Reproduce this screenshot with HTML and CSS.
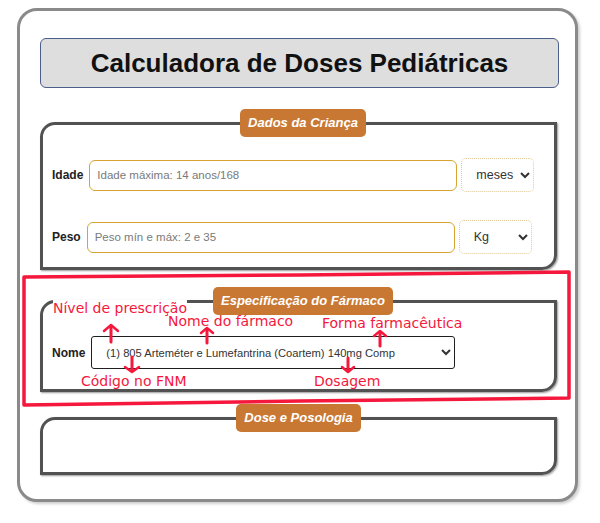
FILE: index.html
```html
<!DOCTYPE html>
<html lang="pt">
<head>
<meta charset="utf-8">
<title>Calculadora de Doses Pediátricas</title>
<link rel="stylesheet" href="styles.css">
</head>
<body>
<main class="card">
  <h1 class="title">Calculadora de Doses Pediátricas</h1>

  <fieldset class="group group-child">
    <legend>Dados da Criança</legend>
    <div class="rows">
      <div class="row">
        <label class="lbl" for="idade">Idade</label>
        <input id="idade" class="field" type="text" placeholder="Idade máxima: 14 anos/168">
        <select class="unit"><option>meses</option><option>anos</option></select>
      </div>
      <div class="row">
        <label class="lbl" for="peso">Peso</label>
        <input id="peso" class="field" type="text" placeholder="Peso mín e máx: 2 e 35">
        <select class="unit"><option>Kg</option></select>
      </div>
    </div>
  </fieldset>

  <fieldset class="group group-drug">
    <legend>Especificação do Fármaco</legend>
    <div class="row">
      <label class="lbl" for="nome">Nome</label>
      <select id="nome" class="drug"><option>(1) 805 Arteméter e Lumefantrina (Coartem) 140mg Comp</option></select>
    </div>
  </fieldset>

  <fieldset class="group group-dose">
    <legend>Dose e Posologia</legend>
  </fieldset>
</main>

<div class="annotations" aria-hidden="true">
  <svg class="marks" width="600" height="523" viewBox="0 0 600 523">
    <path class="box" d="M24 277 L300 275 L569 272 L569 398 L300 401 L24 405 Z"/>
    <g class="arrow">
      <path d="M111 342 L111 327"/><path class="head" d="M104 331 L111 325 L118 331"/>
      <path d="M207 343 L207 330"/><path class="head" d="M201 333 L207 328 L213 333"/>
      <path d="M380 346 L380 333"/><path class="head" d="M374 336 L380 331 L386 336"/>
      <path d="M132 357 L132 370"/><path class="head" d="M125 367 L132 372 L139 367"/>
      <path d="M348 358 L348 370"/><path class="head" d="M342 367 L348 372 L354 367"/>
    </g>
  </svg>
  <span class="note note-nivel">Nível de prescrição</span>
  <span class="note note-nome">Nome do fármaco</span>
  <span class="note note-forma">Forma farmacêutica</span>
  <span class="note note-codigo">Código no FNM</span>
  <span class="note note-dosagem">Dosagem</span>
</div>
</body>
</html>
```

FILE: styles.css
```css
html, body {
  margin: 0;
  padding: 0;
  background: #ffffff;
}

body {
  font-family: "Liberation Sans", Arial, sans-serif;
  color: #222;
  position: relative;
  width: 600px;
  height: 523px;
  overflow: hidden;
}

.card {
  box-sizing: border-box;
  width: 561px;
  height: 494px;
  margin: 8px 0 0 17px;
  padding: 27px 16px 0 20px;
  border: 3px solid #8a8a8a;
  border-radius: 20px;
  box-shadow: 2px 2px 3px #cfcfcf;
  display: flex;
  flex-direction: column;
  background: #fff;
}

.title {
  box-sizing: border-box;
  margin: 0;
  height: 50px;
  border: 1px solid #4b5e8c;
  border-radius: 6px;
  background: #dedede;
  color: #111;
  font-size: 26px;
  font-weight: bold;
  line-height: 48px;
  text-align: center;
}

.group {
  margin: 0 2px 0 0;
  min-width: 0;
  border: 3px solid #525252;
  border-radius: 15px 0 15px 0;
  box-shadow: 1px 1px 2px #9a9a9a;
}

.group legend {
  margin: 0 auto;
  padding: 6px 8px;
  background: #c97833;
  color: #fff;
  font-size: 13px;
  font-weight: bold;
  font-style: italic;
  line-height: 16px;
  border-radius: 5px;
}

.group-child {
  margin-top: 21px;
  padding: 21px 0 13px 9px;
}

.group-drug {
  margin-top: 17px;
  padding: 21px 0 20px 9px;
}

.group-dose {
  margin-top: 12px;
  padding: 0 0 40px 0;
}

.rows {
  display: flex;
  flex-direction: column;
  gap: 28px;
}

.row {
  display: flex;
  align-items: center;
}

.lbl {
  font-size: 12px;
  font-weight: bold;
  color: #222;
  margin-right: 6px;
}

.field {
  box-sizing: border-box;
  width: 368px;
  height: 31px;
  margin: 0;
  padding: 0 7px;
  border: 1.5px solid #d8a431;
  border-radius: 6px;
  background: #fff;
  font-family: "Liberation Sans", Arial, sans-serif;
  font-size: 11.5px;
  color: #333;
}

.field::placeholder {
  color: #7a7a7a;
}

.unit {
  box-sizing: border-box;
  width: 73px;
  height: 34px;
  margin: 0 0 0 4px;
  padding: 0 0 0 10px;
  border: 1px dotted #e0c996;
  border-radius: 5px;
  background: #fff;
  font-family: "Liberation Sans", Arial, sans-serif;
  font-size: 12.5px;
  color: #333;
}

.drug {
  box-sizing: border-box;
  width: 364px;
  height: 33px;
  margin: 0;
  padding: 0 0 0 10px;
  border: 1.5px solid #1f1f1f;
  border-radius: 3px;
  background: #fff;
  font-family: "Liberation Sans", Arial, sans-serif;
  font-size: 11.2px;
  color: #333;
}

/* annotation overlay */
.annotations {
  position: absolute;
  left: 0;
  top: 0;
  width: 600px;
  height: 523px;
  pointer-events: none;
}

.marks {
  position: absolute;
  left: 0;
  top: 0;
}

.marks path {
  fill: none;
  stroke: #f5173c;
  stroke-linecap: round;
  stroke-linejoin: round;
}

.marks .box {
  stroke-width: 3.5;
}

.arrow path {
  stroke-width: 3;
}

.arrow .head {
  stroke-width: 2.5;
}

.note {
  position: absolute;
  font-family: "DejaVu Sans", sans-serif;
  font-size: 14px;
  line-height: 16px;
  color: #f5173c;
  white-space: nowrap;
  background: #fff;
}

.note-nivel { left: 53px; top: 300px; }
.note-nome { left: 168px; top: 313px; background: transparent; }
.note-forma { left: 322px; top: 315px; background: transparent; }
.note-codigo { left: 81px; top: 373px; background: transparent; }
.note-dosagem { left: 314px; top: 373px; background: transparent; }
```
